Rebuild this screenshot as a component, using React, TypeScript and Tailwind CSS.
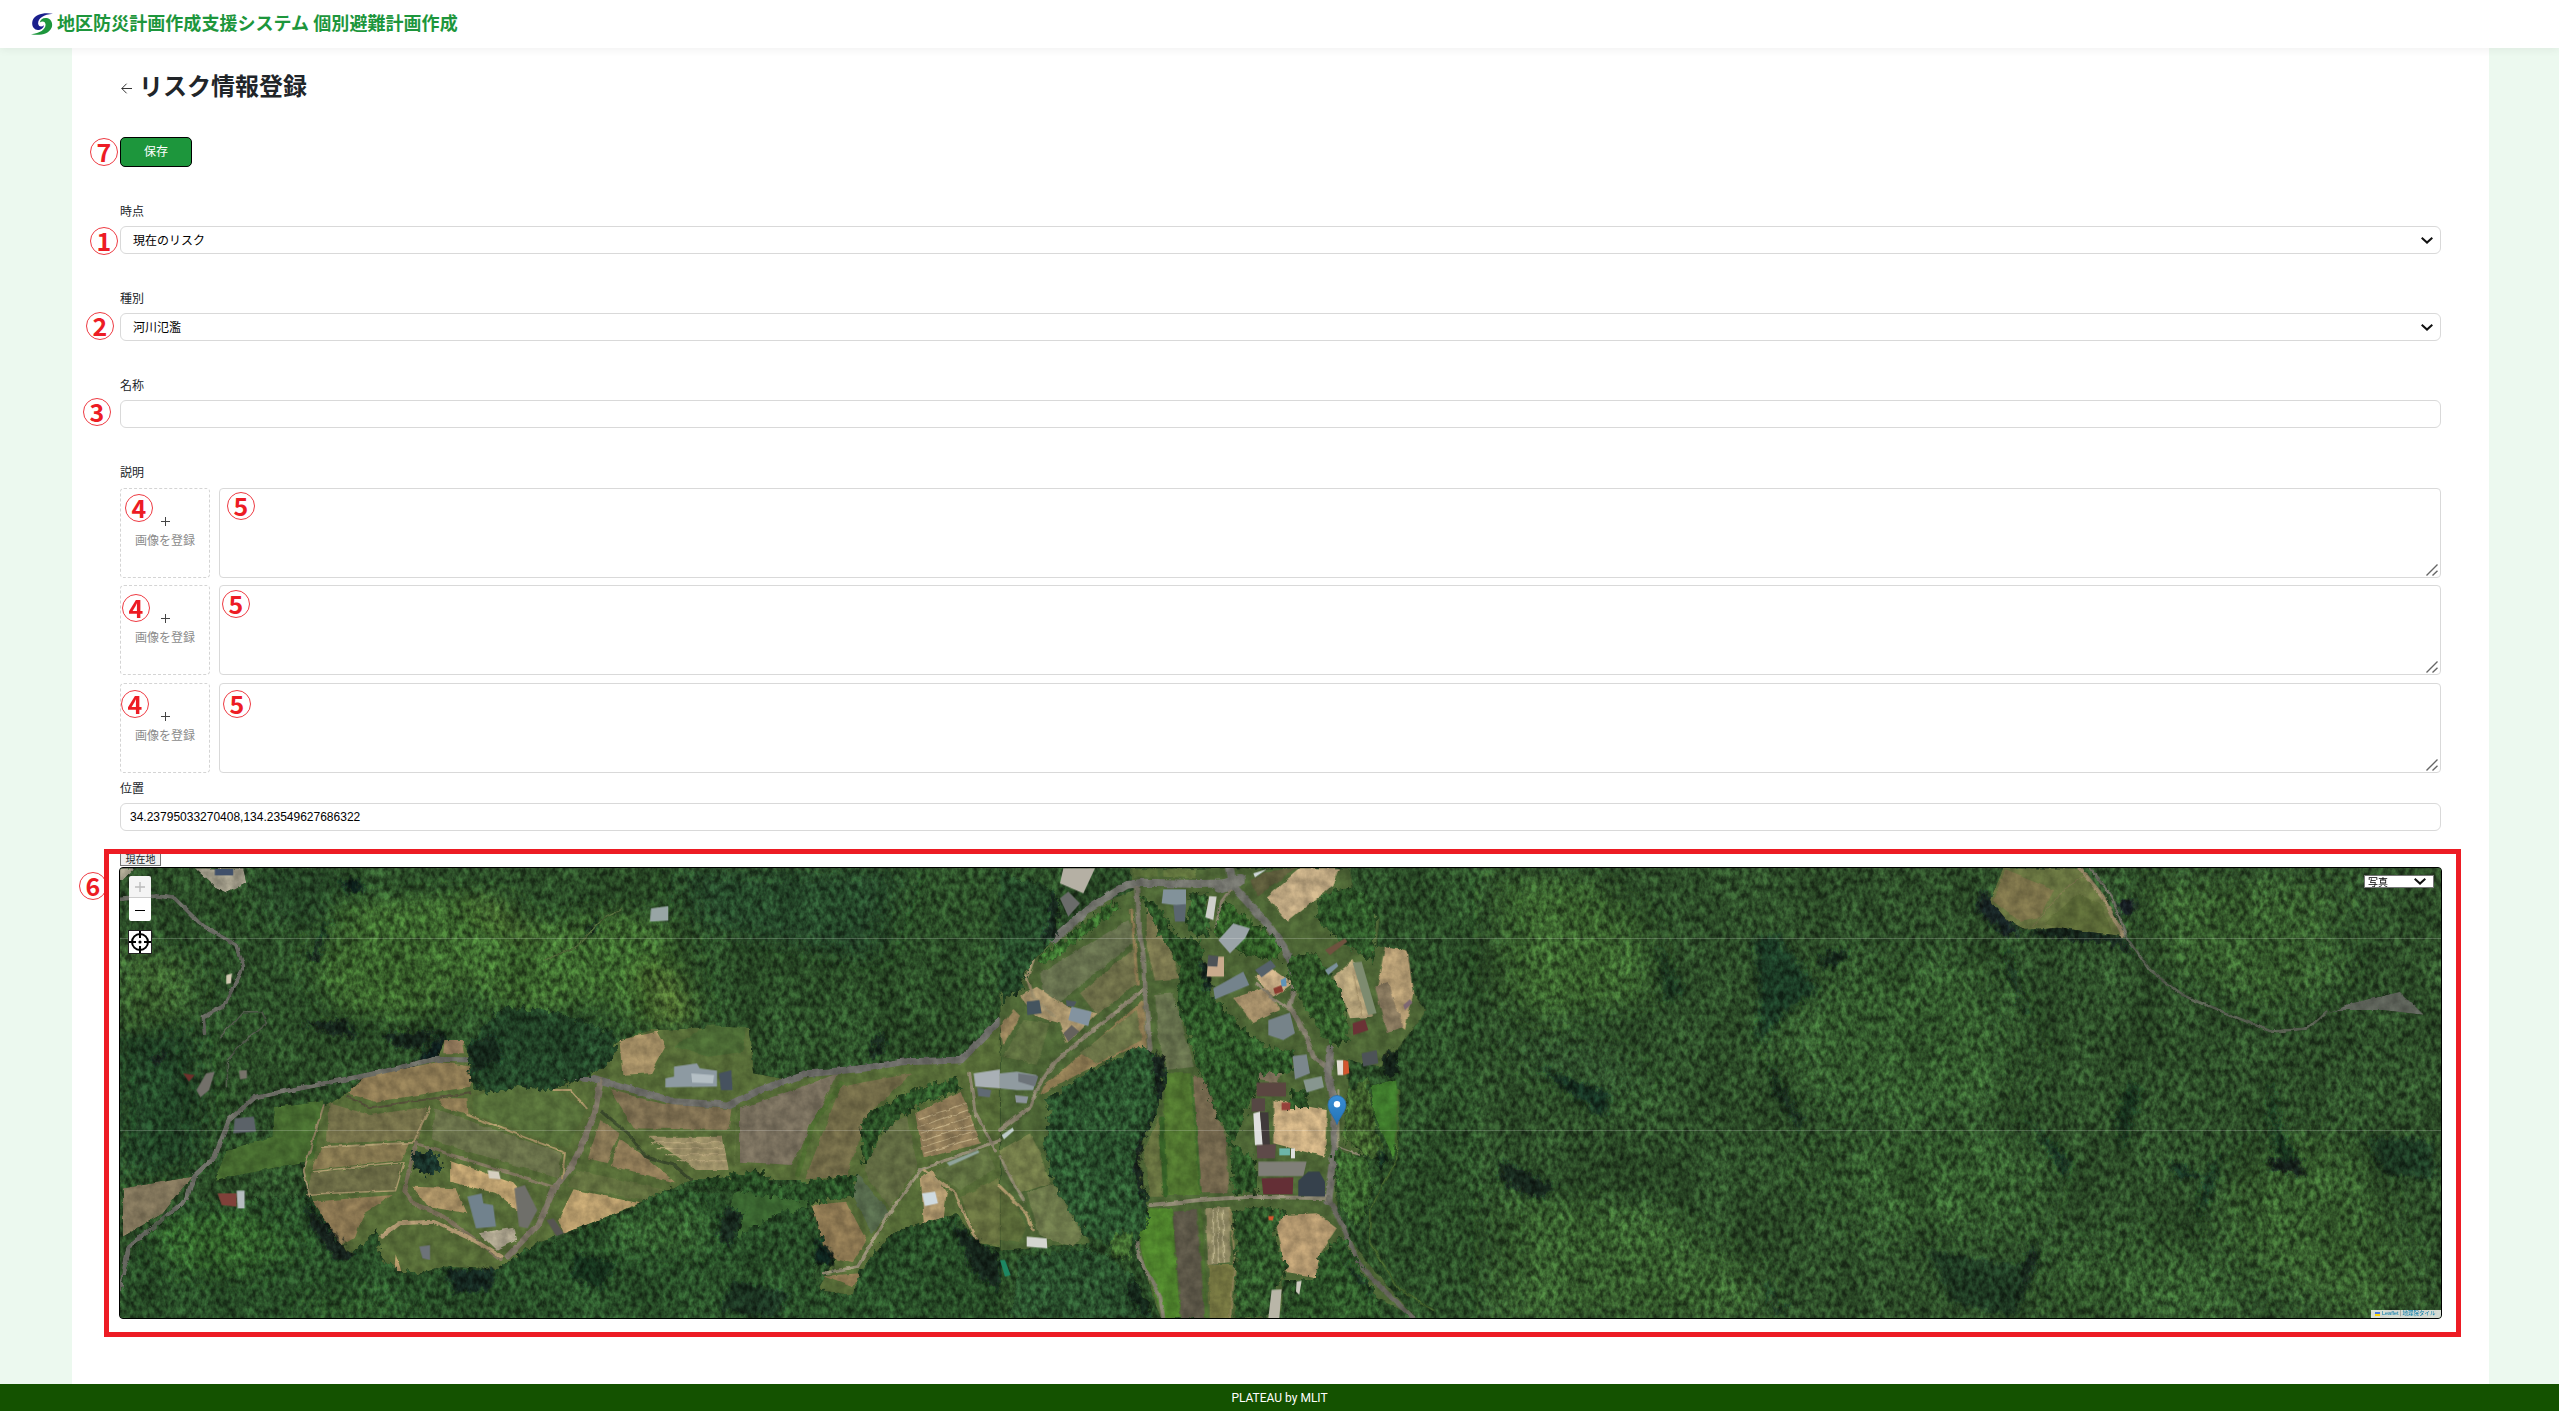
import type { ReactNode } from "react";

type Shape = [points: string, fill: string];

/* ---------- aerial photo: west part ---------- */
const westFarm =
  "370,1020 355,930 390,740 430,700 590,590 600,540 632,540 650,600 650,690 780,680 850,650 905,540 960,510 1130,500 1140,640 1200,660 1320,630 1500,590 1568,480 1568,1160 1530,1150 1490,1060 1380,1120 1330,1230 1310,1305 1250,1290 1280,1200 1240,1040 1220,960 1030,960 930,1040 760,1150 710,1230 600,1220 540,1250 525,1330 510,1290 515,1220 480,1200 430,1180";

const westFields: Shape[] = [
  ["400,730 470,765 570,740 555,840 395,850", "#747049"],
  ["385,865 540,850 525,900 370,930", "#85774f"],
  ["368,938 525,912 515,990 362,1003", "#6b6b45"],
  ["370,1025 510,1005 460,1060 445,1130 420,1155", "#8a7651"],
  ["430,700 460,650 590,605 650,620 645,680 480,725", "#8d7a53"],
  ["600,540 632,540 636,580 598,580", "#8a7356"],
  ["590,715 640,715 642,765 600,745", "#8d7a53"],
  ["583,745 805,880 798,955 578,842", "#687049"],
  ["650,705 730,675 790,690 848,745 815,865 650,762", "#57703a"],
  ["890,690 980,732 1100,748 1095,810 930,805", "#7d6e50"],
  ["1115,745 1200,695 1285,640 1240,800 1205,915 1115,905", "#776e5c"],
  ["1290,680 1415,640 1340,760 1300,950 1228,958", "#716a47"],
  ["955,830 1085,830 1095,930 1040,930", "#9a8e66"],
  ["905,835 950,890 1003,968 890,918", "#8f7b57"],
  ["872,780 905,820 883,910 850,895", "#847452"],
  ["830,930 980,988 950,1022 815,980", "#62703f"],
  ["825,988 940,1030 808,1122 798,1080", "#b59a6a"],
  ["1420,760 1500,695 1535,850 1435,895", "#8f7b57"],
  ["1370,800 1405,768 1425,920 1375,1045 1330,930", "#616b42"],
  ["1320,940 1375,1060 1345,1120 1310,1000", "#566a4c"],
  ["1240,1035 1300,1025 1335,1140 1310,1210 1265,1190", "#8c7751"],
  ["1258,1248 1325,1240 1312,1282", "#8c7751"],
  ["1450,940 1545,865 1560,925 1500,990", "#5f7040"],
  ["1500,1010 1568,955 1568,1155 1530,1150", "#66703f"],
  ["1430,950 1450,930 1475,1000 1470,1070 1435,1090", "#ab946a"],
  ["905,540 970,515 985,560 960,640 910,645", "#a08b62"],
  ["1000,560 1060,495 1125,500 1120,575 1060,590", "#4c6b35"],
  ["1100,1000 1230,965 1235,1050 1150,1110 1100,1150", "#3a6530"],
  ["40,985 160,950 110,1060 40,1130", "#80745a"],
  ["305,740 390,720 372,900 200,960 220,870 300,830", "#466a2f"],
  ["165,25 250,25 255,70 222,98 200,80", "#a09b88"],
  ["35,25 60,25 40,60 35,60", "#a09b88"],
  ["610,900 720,970 760,1050 735,1060 690,1000 610,965", "#bb9f6e"],
  ["545,980 620,985 640,1060 570,1040", "#a58d62"],
  ["660,1120 720,1100 725,1140 690,1170", "#a8a08a"],
  ["515,1180 530,1260 525,1340 510,1300", "#b59a6a"],
];

const westTrees: Shape[] = [
  ["355,1010 400,1120 440,1190 480,1110 490,1200 520,1230 560,1240 600,1225 690,1230 740,1170 830,1120 930,1040 990,985 1070,1000 1120,1060 1110,1130 1180,1060 1230,1045 1260,1140 1240,1250 1260,1300 1310,1310 1330,1220 1380,1120 1480,1070 1568,1200 1568,1380 35,1380 35,1290 60,1160 150,1030", "#2a5029"],
  ["640,560 700,440 780,450 900,520 895,600 850,650 780,690 730,680 680,700 645,660", "#234528"],
  ["1330,770 1400,700 1490,650 1500,690 1420,740 1360,820 1330,920 1325,830", "#2d5428"],
  ["1020,970 1150,930 1180,980 1320,940 1310,1010 1240,1030 1100,990", "#2c5529"],
  ["545,880 580,875 600,920 570,950 550,930", "#1d3a30"],
];

const westShade: Shape[] = [
  ["415,130 395,200 375,310 365,300 385,220", "#0e1f1c"],
  ["560,590 600,510 600,570 575,610 540,640", "#101f1d"],
  ["870,655 905,560 900,620", "#101f1d"],
  ["350,1000 440,1180 410,1190 355,1060", "#12261f"],
  ["845,230 870,160 862,220", "#0e1f1c"],
  ["1350,540 1370,510 1365,580 1340,600", "#12261f"],
  ["90,590 120,570 100,625", "#16211f"],
  ["420,60 450,55 460,100 430,95", "#11231c"],
  ["350,490 430,480 450,540 400,520", "#14281f"],
  ["490,520 590,510 560,570 510,560", "#14281f"],
];

/* shadows and sunlit crowns laid over the southern woods */
const westTreeShade: Shape[] = [
  ["355,1030 400,1110 445,1190 415,1200 370,1110", "#12241f"],
  ["1250,1130 1280,1180 1270,1230 1245,1200", "#0f201c"],
  ["600,1230 690,1225 680,1290 620,1300", "#162b22"],
  ["830,1180 900,1210 870,1290 820,1250", "#17301f"],
  ["1090,1040 1120,1060 1100,1160 1075,1130", "#14281f"],
  ["1480,1080 1568,1190 1568,1300 1520,1230", "#14281f"],
  ["1100,1260 1200,1300 1180,1375 1080,1350", "#1a3424"],
  ["640,560 690,520 700,600 650,640", "#15291f"],
];

const westTreeLight: Shape[] = [
  ["90,1080 260,1050 340,1160 240,1260 120,1220", "#33602c"],
  ["880,1090 1000,1010 1060,1080 1040,1180 920,1170", "#376530"],
  ["380,1290 540,1330 520,1375 360,1375", "#2f592b"],
];

const westBuildings: Shape[] = [
  ["200,28 232,28 232,46 200,46", "#40506a"],
  ["960,145 990,138 990,182 958,185", "#98a5a5"],
  ["1000,620 1040,610 1045,625 1075,632 1075,680 985,682 985,655 1000,650", "#8d9aa2"],
  ["1078,640 1100,630 1102,690 1082,690", "#46525f"],
  ["1030,640 1070,645 1068,670 1032,668", "#b4bfc4"],
  ["1522,640 1568,628 1568,685 1525,680", "#a9b0b5"],
  ["1528,682 1553,690 1550,712 1530,708", "#606a73"],
  ["640,1010 665,1000 668,1030 685,1035 690,1100 655,1105", "#71828d"],
  ["722,985 740,975 762,1050 745,1105 730,1100", "#6f6f6a"],
  ["675,930 695,935 698,958 678,955", "#d6cfc0"],
  ["778,1080 790,1075 808,1120 795,1128", "#575552"],
  ["1432,1000 1455,995 1460,1030 1437,1038", "#cfdadf"],
  ["235,775 268,770 272,815 232,820", "#5b6268"],
  ["205,1000 238,1000 238,1040 212,1035", "#80413a"],
  ["238,992 252,992 252,1045 240,1045", "#b6bdc0"],
  ["185,640 200,635 190,690 175,712 168,690", "#73706a"],
  ["145,640 165,645 155,665", "#6e302c"],
  ["242,632 256,630 256,655 244,658", "#77736a"],
  ["556,1160 575,1155 575,1200 562,1195", "#6d7379"],
  ["1475,908 1530,870 1532,878 1480,918", "#8fa39a"],
  ["220,345 230,340 228,370 220,372", "#d2c9b3"],
];

const westRoads: [string, string, number][] = [
  ["35,1300 50,1160 150,1020 163,950 200,890 225,780 270,712 340,688 480,640 580,598 650,600", "#696a62", 5],
  ["35,118 100,108 130,115 180,200 238,255 250,320 215,440 180,470 182,520", "#64665e", 4],
  ["222,680 222,600 260,530 290,490 280,455 250,455 210,530", "#4f5a49", 2],
  ["860,655 930,690 1000,725 1095,735 1150,690 1230,642 1330,625 1400,605 1500,600 1568,480", "#6b6b66", 7],
  ["872,660 862,760 825,910 790,990 765,1090 710,1190", "#7a7263", 6],
  ["800,650 870,660", "#6b6b66", 4],
  ["550,850 530,990 545,1030 600,1070 700,1200", "#786e58", 4],
  ["550,850 640,900 790,980", "#7d745c", 3],
  ["490,1130 520,1090 580,1085 640,1130 700,1190", "#ad9670", 4],
  ["1568,840 1430,930 1375,1060 1320,1220 1260,1240", "#928b72", 3],
  ["1435,930 1490,1000 1510,1080 1530,1150", "#a9946c", 2.5],
  ["1515,640 1525,760 1560,870", "#8a836c", 3],
  ["390,735 355,930 365,1010", "#8f8160", 2],
  ["385,862 545,848 575,740", "#a39269", 2],
  ["362,1003 515,992 530,905 372,935", "#a39269", 1.5],
  ["430,710 470,742 645,700", "#534f38", 2],
  ["875,755 920,820 950,890 1000,915 1030,960", "#3b4a2c", 3],
  ["640,765 810,878 805,955", "#a39064", 2],
  ["790,690 820,690 848,745", "#a39064", 2],
  ["1110,745 1105,910", "#5c713c", 2],
  ["1290,670 1240,800 1215,945", "#4d6a30", 5],
  ["775,300 830,260 880,170 910,145", "#506838", 2],
];

/* ---------- aerial photo: village ---------- */
const midFarm =
  "0,860 0,400 60,360 100,300 170,230 260,150 400,90 390,25 600,25 690,25 860,25 1050,25 1060,80 960,110 1140,170 1130,260 1220,270 1240,400 1280,450 1200,560 1140,620 1040,600 1050,700 1030,830 1100,880 1010,900 1010,1060 1080,1180 1250,1375 1100,1300 950,1260 850,1260 840,1375 480,1375 400,1130 440,1030 250,1110 270,1150 0,1170";

const midFields: Shape[] = [
  ["120,340 385,180 410,240 180,425 130,410", "#656f4d"],
  ["240,400 400,265 412,370 290,465", "#6f7049"],
  ["440,140 470,160 540,355 465,362 440,260", "#77744c"],
  ["465,405 520,400 545,490 585,620 500,630 475,540", "#65704c"],
  ["130,680 430,420 440,560 380,570 240,640 120,705", "#8d7a52"],
  ["240,580 410,450 425,540 290,610", "#6c7548"],
  ["10,590 70,480 150,490 110,615", "#5f7040"],
  ["0,500 40,450 60,470 10,560", "#948059"],
  ["0,870 90,820 120,880 150,970 60,1000 0,900", "#717a48"],
  ["80,1000 160,970 250,1120 220,1160 120,1130", "#6c784a"],
  ["0,980 50,1040 80,1100 60,1150 0,1140", "#5a6a38"],
  ["495,640 570,640 600,1005 500,1005 490,800", "#50752f"],
  ["578,645 620,660 650,760 680,840 685,1000 605,1000", "#72664c"],
  ["430,870 475,770 490,1010 450,1010", "#66713f"],
  ["410,1110 450,1045 515,1045 540,1375 490,1375 440,1240", "#4f842c"],
  ["518,1055 590,1050 615,1375 545,1375", "#5a5546"],
  ["615,1045 690,1040 690,1210 625,1215", "#8b8560"],
  ["625,1215 700,1215 690,1375 630,1375", "#72733f"],
  ["800,110 900,25 1020,25 1000,75 865,185", "#bda680"],
  ["755,60 790,35 890,25 770,110", "#5b5a3a"],
  ["400,28 470,28 470,50 400,50", "#5b713a"],
  ["490,28 590,28 585,55 490,50", "#62753e"],
  ["700,415 800,380 840,450 760,490", "#a28c67"],
  ["765,350 810,320 880,370 820,410", "#c0a680"],
  ["1000,350 1060,300 1120,470 1050,475", "#b7a47b"],
  ["1155,260 1225,275 1240,400 1215,510 1180,480 1130,390", "#b39b72"],
  ["1125,380 1165,365 1210,500 1160,520", "#85765c"],
  ["820,720 980,750 975,890 820,850", "#c8ac80"],
  ["850,1065 950,1060 1010,1105 960,1180 950,1255 860,1240 830,1100", "#b1966d"],
  ["1110,680 1190,660 1200,760 1180,900 1160,850 1120,760", "#3f7a2c"],
  ["775,660 780,625 840,640 830,670", "#7d705a"],
  ["60,410 110,380 200,440 290,460 200,550 180,490 110,470", "#a8946c"],
];

const midTrees: Shape[] = [
  ["0,30 60,60 150,80 175,130 165,240 90,310 60,390 0,430", "#274b2a"],
  ["380,575 420,560 480,590 500,640 470,760 400,900 440,1010 445,1080 390,1180 250,1120 160,970 130,850 150,760 130,720 190,690 240,650", "#2c552f"],
  ["60,1190 260,1165 340,1200 400,1250 460,1375 30,1375", "#2b522e"],
  ["340,1120 400,1120 390,1200 330,1190", "#40682f"],
  ["420,110 470,130 530,230 600,240 620,380 720,500 800,560 880,570 880,640 790,640 700,850 770,900 770,1000 700,1000 690,850 600,640 530,420 540,330", "#2f5829"],
  ["860,290 950,280 1030,400 1050,540 990,560 930,470 870,370", "#345d2b"],
  ["960,110 1050,80 1130,140 1120,310 1030,250 950,180", "#315b2b"],
  ["700,1050 800,1040 860,1060 820,1110 860,1230 800,1375 700,1375 710,1200", "#31592b"],
  ["870,690 920,690 925,745 870,745", "#2f5829"],
  ["1000,870 1100,890 1120,990 1080,1100 1020,1040 1010,960", "#3a652e"],
  ["960,1180 1030,1130 1120,1290 1150,1375 860,1375 890,1260 950,1250", "#2f582a"],
  ["1040,700 1100,650 1120,760 1160,900 1090,880 1030,840", "#42642e"],
  ["670,120 760,190 830,230 840,300 740,290 640,220", "#336028"],
  ["570,100 620,100 630,230 560,220", "#30592b"],
  ["110,300 330,125 360,145 130,320", "#396a2d"],
];

const midShade: Shape[] = [
  ["455,575 495,590 490,690 440,820 420,900 445,1070 400,930 400,890 470,730", "#12241f"],
  ["150,90 178,130 165,240 120,240 150,180", "#14261f"],
  ["600,290 640,330 635,390 610,390", "#182a22"],
  ["1140,600 1180,560 1200,640 1160,650", "#13251f"],
  ["1130,850 1170,900 1140,930", "#183020"],
  ["1000,1170 1060,1230 1140,1320 1100,1290", "#182b22"],
  ["400,1250 460,1350 440,1375 380,1300", "#16291f"],
];

const midBuildings: Shape[] = [
  ["190,25 285,25 250,100 180,70", "#b5b0a4"],
  ["180,115 205,95 240,130 205,170", "#6a6c6a"],
  ["490,88 558,88 558,140 485,130", "#82929a"],
  ["520,135 558,132 555,185 525,185", "#5a666f"],
  ["628,108 650,110 640,180 616,172", "#cfd0cc"],
  ["655,240 700,190 750,205 735,235 690,280", "#9aa3a8"],
  ["625,290 672,290 672,350 620,350", "#c9ab8d"],
  ["625,285 655,288 652,320 622,318", "#4e5357"],
  ["640,385 730,335 748,375 645,418", "#74838c"],
  ["765,330 812,300 828,320 785,352", "#56626b"],
  ["805,480 870,458 885,520 850,540 805,525", "#768389"],
  ["820,385 845,375 850,395 825,402", "#8b3c30"],
  ["842,360 858,352 860,378 845,380", "#5f94b8"],
  ["1058,308 1085,305 1130,460 1105,465", "#7d8b6f"],
  ["975,270 1035,235 1042,245 990,285", "#6f523f"],
  ["975,330 1010,308 1015,318 985,345", "#7b919b"],
  ["1058,490 1095,478 1105,510 1060,525", "#6b3236"],
  ["1210,435 1230,418 1238,428 1215,450", "#7d6772"],
  ["1010,600 1030,600 1030,645 1013,645", "#e3ddd4"],
  ["1030,600 1045,603 1048,640 1030,645", "#d4562f"],
  ["1085,580 1130,570 1135,610 1090,620", "#4d5357"],
  ["878,588 920,583 930,640 885,658", "#7b878c"],
  ["910,660 965,648 972,682 920,698", "#87968f"],
  ["770,668 858,668 858,710 770,708", "#5b4641"],
  ["755,715 795,715 795,755 755,755", "#564744"],
  ["845,728 872,728 870,750 845,750", "#96403a"],
  ["760,760 780,755 790,855 765,855", "#dfe0de"],
  ["780,757 805,757 810,855 788,855", "#40393a"],
  ["770,855 828,852 825,895 772,895", "#5e4a49"],
  ["838,865 870,865 870,886 838,886", "#6db5a9"],
  ["873,865 885,865 885,895 873,895", "#dfe0de"],
  ["775,905 920,905 910,948 775,948", "#807f78"],
  ["785,955 880,952 878,1003 790,1003", "#642f36"],
  ["895,962 925,935 958,935 975,965 975,1010 895,1008", "#36414c"],
  ["805,1068 822,1068 818,1082 806,1080", "#d4562f"],
  ["815,1290 845,1288 838,1375 805,1375", "#b9b6a8"],
  ["80,425 118,420 125,460 82,465", "#44545f"],
  ["215,440 275,455 265,498 205,480", "#8393a0"],
  ["198,420 230,425 222,440 200,438", "#4e585f"],
  ["190,520 215,495 238,515 205,545", "#65625d"],
  ["0,640 50,635 110,645 100,690 50,690 0,685", "#909ba0"],
  ["55,640 115,648 105,680 55,665", "#6d747a"],
  ["45,705 85,710 80,730 48,728", "#8b939a"],
  ["5,825 38,803 42,812 12,838", "#bccac9"],
  ["80,1130 140,1135 142,1165 80,1160", "#d3d5d0"],
  ["0,1200 15,1200 32,1245 15,1250", "#1d8763"],
  ["760,40 800,28 765,52", "#ced6d8"],
  ["890,1265 905,1262 898,1305 888,1295", "#cdcabf"],
];

const midRoads: [string, string, number][] = [
  ["0,810 90,740 120,670 170,600 280,510 435,385", "#88816c", 4],
  ["160,240 260,150 380,75 430,68 600,72 680,70", "#70716a", 8],
  ["690,25 700,80 800,190 850,260 890,350", "#70716a", 8],
  ["660,80 720,60", "#70716a", 12],
  ["410,85 415,200 430,290 435,390 450,570", "#7d7a6a", 5],
  ["890,350 870,440 910,510 940,590 990,630", "#7f7a6a", 5],
  ["770,370 810,410 870,450", "#867e6b", 3],
  ["990,570 985,650 1000,720 1005,850 985,1020", "#73716a", 8],
  ["650,200 660,130 690,90", "#867e6b", 3],
  ["450,1035 600,1020 750,1010 985,1015", "#8a856f", 4],
  ["985,1015 1030,1100 1070,1200 1120,1260 1240,1375", "#66655c", 5],
  ["405,1130 420,1200 480,1310 490,1375", "#807d6b", 4],
  ["100,300 80,350 100,410 160,470", "#9d8f6c", 3],
  ["0,890 40,970 70,1020", "#918b72", 3],
  ["0,980 80,1060 100,1110", "#a99569", 3],
  ["485,780 497,1005", "#355f26", 5],
  ["575,650 602,1000", "#3f6b2b", 2],
  ["600,1050 620,1375", "#496a2f", 3],
  ["690,1050 705,1200 690,1375", "#8a7f55", 2],
  ["1015,690 1015,860 1090,890", "#8f8a72", 2],
  ["1195,690 1190,900 1110,1050 1110,1150 1200,1290 1300,1350", "#48682f", 2.5],
  ["395,150 412,370", "#8d7a52", 3],
  ["640,1050 640,1210", "#bdb490", 1],
  ["655,1050 655,1210", "#bdb490", 1],
  ["670,1050 670,1210", "#bdb490", 1],
  ["1060,340 1085,465", "#9b8963", 1],
];

/* ---------- aerial photo: eastern hills ---------- */
const eastFields: Shape[] = [
  ["822,25 945,25 985,110 1015,228 960,215 910,200 860,210 825,175 800,120", "#66723f"],
  ["825,30 905,90 880,175 850,185 805,120", "#7b7249"],
  ["945,100 985,140 1000,220 940,210 890,190", "#5a6836"],
  ["1340,470 1390,430 1470,395 1510,465 1440,450 1370,450", "#5c6158"],
];

const eastShade: Shape[] = [
  ["785,90 830,150 850,230 820,220 780,150", "#122420"],
  ["860,215 920,195 1020,230 1035,290 1000,250 900,235", "#13261e"],
  ["1010,130 1035,115 1040,150 1015,170", "#141f22"],
  ["825,240 865,480 850,430 830,330", "#152a1e"],
  ["415,240 450,220 520,390 470,450 420,560 425,400", "#1f3d25"],
  ["260,250 300,400 270,430", "#1d3a24"],
  ["430,1230 455,1350 480,1320 450,1370", "#13261e"],
  ["870,1140 880,1190 840,1370 850,1250", "#13261e"],
  ["700,1170 850,1220 840,1370 740,1330", "#213f27"],
  ["1260,650 1270,780 1315,950 1270,900 1255,760", "#17301f"],
  ["1030,650 1045,700 1015,880 1010,760", "#17301f"],
  ["1420,830 1520,840 1530,960 1440,940", "#1d3824"],
  ["1250,900 1310,900 1315,950 1260,930", "#12221f"],
  ["0,900 90,980 60,1020 0,960", "#14281f"],
  ["60,620 180,700 170,780 130,720", "#193222"],
  ["435,600 495,780 490,820 450,700", "#152a1e"],
  ["850,760 930,900 925,960 890,850", "#193222"],
  ["1180,870 1160,1000 1140,1090 1150,960", "#193222"],
  ["1090,900 1150,950 1110,960", "#193222"],
  ["570,260 560,300 530,330 520,290", "#15291e"],
];

const eastLight: Shape[] = [
  ["0,60 150,60 240,200 240,420 60,470 0,380", "#3b642f"],
  ["560,290 800,300 860,560 830,740 620,780 480,650 450,500", "#365c2e"],
  ["560,830 780,780 900,900 870,1100 620,1130 500,950", "#355b2e"],
  ["1300,800 1400,850 1450,1100 1500,1300 1400,1380 1200,1200 1180,980", "#375e2f"],
  ["1050,70 1350,60 1370,350 1250,450 1080,300", "#375f2f"],
  ["0,1000 260,1050 420,1250 420,1375 0,1375", "#375e2f"],
  ["850,1250 1050,1100 1250,1250 1200,1375 870,1375", "#355c2d"],
  ["20,540 180,560 230,680 150,690 50,620", "#33552f"],
];

const eastRoads: [string, string, number][] = [
  ["948,25 985,110 1018,228", "#968766", 4],
  ["965,25 1000,110 1022,225", "#717265", 3],
  ["1022,228 1060,330 1120,410 1200,470 1260,515 1320,505 1350,455", "#596152", 3],
  ["870,200 920,90 960,40", "#7d764f", 1],
];

function Polys({ items }: { items: Shape[] }) {
  return (
    <>
      {items.map(([points, fill], i) => (
        <polygon key={i} points={points} fill={fill} />
      ))}
    </>
  );
}

function Roads({ items }: { items: [string, string, number][] }) {
  return (
    <>
      {items.map(([points, stroke, width], i) => (
        <polyline
          key={i}
          points={points}
          fill="none"
          stroke={stroke}
          strokeWidth={width}
          strokeLinejoin="round"
          strokeLinecap="round"
          vectorEffect="non-scaling-stroke"
        />
      ))}
    </>
  );
}

const WEST = "translate(100 860) scale(.574 .3333)";
const MID = "translate(1000 860) scale(.3333)";
const EAST = "translate(1500 860) scale(.6122 .3333)";

function AerialPhoto() {
  return (
    <svg className="block h-full w-full" viewBox="120 868 2321 450" preserveAspectRatio="none">
      <defs>
        <filter id="canopy" filterUnits="userSpaceOnUse" x="110" y="858" width="2341" height="470" colorInterpolationFilters="sRGB">
          <feTurbulence type="fractalNoise" baseFrequency="0.19 0.13" numOctaves={3} seed={7} result="n" />
          <feTurbulence type="fractalNoise" baseFrequency="0.03 0.015" numOctaves={4} seed={11} result="m" />
          <feColorMatrix in="n" type="matrix" values="1.9 0 0 0 -0.45  1.9 0 0 0 -0.45  1.9 0 0 0 -0.45  0 0 0 0 1" result="g" />
          <feColorMatrix in="m" type="matrix" values="1.6 0 0 0 -0.3  1.6 0 0 0 -0.3  1.6 0 0 0 -0.3  0 0 0 0 1" result="p" />
          <feDisplacementMap in="SourceGraphic" in2="n" scale="13" xChannelSelector="G" yChannelSelector="B" result="d" />
          <feComposite in="d" in2="g" operator="arithmetic" k1="0.85" k2="0.54" result="t" />
          <feComposite in="t" in2="p" operator="arithmetic" k1="0.3" k2="0.83" result="u" />
          <feComposite in="u" in2="d" operator="in" />
        </filter>
        <filter id="ground" filterUnits="userSpaceOnUse" x="110" y="858" width="2341" height="470" colorInterpolationFilters="sRGB">
          <feTurbulence type="fractalNoise" baseFrequency="0.09" numOctaves={4} seed={3} result="n" />
          <feColorMatrix in="n" type="matrix" values="1.6 0 0 0 -0.3  1.6 0 0 0 -0.3  1.6 0 0 0 -0.3  0 0 0 0 1" result="g" />
          <feDisplacementMap in="SourceGraphic" in2="n" scale="4" xChannelSelector="G" yChannelSelector="B" result="d" />
          <feComposite in="d" in2="g" operator="arithmetic" k1="0.3" k2="0.85" result="t" />
          <feComposite in="t" in2="d" operator="in" />
        </filter>
        <filter id="soft" x="-20%" y="-20%" width="140%" height="140%">
          <feGaussianBlur stdDeviation="24" />
        </filter>
        <filter id="edge" x="-20%" y="-20%" width="140%" height="140%">
          <feGaussianBlur stdDeviation="5" />
        </filter>
        <linearGradient id="pin" x1="0" y1="0" x2="0" y2="1">
          <stop offset="0" stopColor="#3a8fd6" />
          <stop offset="1" stopColor="#2272b5" />
        </linearGradient>
      </defs>

      <g filter="url(#canopy)">
        <rect x="100" y="850" width="2361" height="490" fill="#2d5029" />
        <rect x="1480" y="850" width="981" height="490" fill="#2f502a" />
        <g transform={WEST}>
          <g filter="url(#soft)">
            <polygon points="420,130 640,100 760,200 900,150 1000,200 1040,480 960,500 860,420 740,480 640,380 560,480 420,460 370,330" fill="#3c682f" />
            <polygon points="640,100 700,120 770,240 720,240 660,170" fill="#4a6e32" />
            <polygon points="950,300 1000,350 1030,480 970,500" fill="#536f33" />
            <polygon points="1000,30 1400,30 1350,300 1050,200" fill="#274929" />
            <polygon points="35,250 160,300 150,460 35,520" fill="#3b602d" />
            <polygon points="35,520 160,500 180,900 35,960" fill="#234427" />
            <polygon points="260,20 420,20 400,200 280,180" fill="#254628" />
          </g>
          <g filter="url(#edge)"><Polys items={westShade} /></g>
        </g>
        <g transform={EAST}>
          <g filter="url(#soft)"><Polys items={eastLight} /></g>
          <g filter="url(#edge)"><Polys items={eastShade} /></g>
        </g>
      </g>

      <g filter="url(#ground)">
        <g transform={WEST}>
          <polygon points={westFarm} fill="#566b37" />
          <Polys items={westFields} />
          <Roads items={westRoads} />
        </g>
        <g transform={MID}>
          <polygon points={midFarm} fill="#4d6535" />
          <Polys items={midFields} />
          <Roads items={midRoads} />
        </g>
        <g transform={EAST}>
          <Polys items={eastFields} />
          <Roads items={eastRoads} />
        </g>
        <g transform={WEST} stroke="#b3a17a" strokeWidth="3">
          <path d="M960 848H1085M970 866H1088M985 884H1090M1005 902H1092M1425 780L1508 730M1428 800L1512 750M1430 820L1518 770M1432 840L1522 792M1434 860L1526 812M1436 880L1530 832" />
        </g>
      </g>

      <g filter="url(#canopy)">
        <g transform={WEST}>
          <Polys items={westTrees} />
          <g filter="url(#soft)"><Polys items={westTreeLight} /></g>
          <g filter="url(#edge)"><Polys items={westTreeShade} /></g>
        </g>
        <g transform={MID}>
          <Polys items={midTrees} />
          <g filter="url(#edge)"><Polys items={midShade} /></g>
        </g>
      </g>

      <g transform={WEST}><Polys items={westBuildings} /></g>
      <g transform={MID}><Polys items={midBuildings} /></g>

      <path d="M120 938.5H2441M120 1130.5H2441" stroke="#fff" strokeOpacity=".2" />

      <path
        d="M1337 1124.5C1334.500 1117 1328 1111.500 1328 1104.500A9 9 0 0 1 1346 1104.500C1346 1111.500 1339.500 1117 1337 1124.500Z"
        fill="url(#pin)"
        stroke="#2a6ea8"
        strokeWidth=".8"
      />
      <circle cx="1337" cy="1104.300" r="3.200" fill="#fff" />
    </svg>
  );
}

function Mark({ n, className }: { n: number; className: string }) {
  return (
    <span
      className={`pointer-events-none absolute z-10 flex h-7 w-7 items-center justify-center rounded-full border border-[#ee3a42] pb-[3px] text-[25px] leading-[26px] font-bold text-[#ed1c24] ${className}`}
    >
      {n}
    </span>
  );
}

function Chevron({ className }: { className: string }) {
  return (
    <svg className={className} viewBox="0 0 12 7" fill="none" stroke="#111" strokeWidth="2">
      <path d="M.7.8 6 5.600 11.300.8" />
    </svg>
  );
}

function Field({ label, className, children }: { label: string; className: string; children: ReactNode }) {
  return (
    <div className={className}>
      <div className="h-[18px] text-xs leading-[18px] text-[#212529]">{label}</div>
      <div className="relative mt-1.5 flex h-7 items-center justify-between rounded-md border border-[#d9d9d9] bg-white text-xs text-black">
        {children}
      </div>
    </div>
  );
}

function NoteRow({ className, four, five }: { className: string; four: string; five: string }) {
  return (
    <div className={`relative flex h-[90px] gap-[9px] ${className}`}>
      <div className="flex w-[90px] flex-col items-center rounded border border-dashed border-[#d4d4d4] pt-[28px] text-xs text-[#8c8c8c]">
        <svg className="h-[9px] w-[9px]" viewBox="0 0 9 9" stroke="#444">
          <path d="M4.500 0V9M0 4.500H9" />
        </svg>
        <span className="mt-[5px] leading-[18px]">画像を登録</span>
      </div>
      <div className="relative flex-1 rounded border border-[#d9d9d9] bg-white">
        <svg className="absolute right-[2px] bottom-[1px] h-3 w-3" viewBox="0 0 12 12" stroke="#666" strokeWidth="1.400">
          <path d="M.5 11.500 11.500.5M6.500 11.500 11.500 6.800" />
        </svg>
      </div>
      <Mark n={4} className={four} />
      <Mark n={5} className={five} />
    </div>
  );
}

export default function App() {
  return (
    <div className='flex h-[1411px] w-[2559px] flex-col overflow-hidden bg-[#ecf9ef] font-["Noto_Sans_CJK_JP",sans-serif]'>
      <header className="relative z-20 flex h-12 shrink-0 items-center bg-white pl-[31px] shadow-[0_2px_8px_rgba(0,0,0,0.06)]">
        <svg className="h-[22px] w-[22px]" viewBox="0 0 22 22">
          <path d="M22 .8C14-.8 4 .5 1.600 7.500.5 11.500 1.500 14.500 4.500 16.500 8 17.800 12.500 16 13 12.200 11 14.200 7.800 14 7.200 11 6.500 6 12 1.500 22 .8Z" fill="#1a1f8c" />
          <path d="M0 21.200C8 22.800 18 21.500 20.700 14.500 22 10.500 20.500 7 17.500 5.500 13 4 9.300 6 8.800 9.500 11 7.800 14 8 14.500 11 15.200 16 9.500 20.500 0 21.200Z" fill="#1d963c" />
        </svg>
        <span className="ml-1 pb-[5px] text-[18px] leading-6 font-bold tracking-[0.05px] whitespace-pre text-[#1d963c]">地区防災計画作成支援システム 個別避難計画作成</span>
      </header>

      <main className="mx-[72px] w-[2417px] flex-1 bg-white px-12 pt-5">
        <div className="flex h-9 items-center">
          <svg className="mt-[5px] ml-px h-[11px] w-[11px]" viewBox="0 0 11 11" fill="none" stroke="#333">
            <path d="M11 5.500H.8M5.600.7.8 5.500 5.600 10.300" />
          </svg>
          <h1 className="ml-[7px] pb-[3px] text-2xl leading-9 font-bold text-[#212529]">リスク情報登録</h1>
        </div>

        <div className="relative mt-[33px] h-[30px]">
          <button className="block h-[30px] w-[72px] rounded-[5px] border border-black bg-[#1d963c] pb-[3px] text-xs leading-none text-white">保存</button>
          <Mark n={7} className="top-[1px] left-[-30px]" />
        </div>

        <Field label="時点" className="mt-[35px]">
          <span className="pl-3">現在のリスク</span>
          <Chevron className="mr-[7px] h-[7px] w-3" />
          <Mark n={1} className="top-[0px] left-[-31px]" />
        </Field>
        <Field label="種別" className="mt-[35px]">
          <span className="pl-3">河川氾濫</span>
          <Chevron className="mr-[7px] h-[7px] w-3" />
          <Mark n={2} className="top-[-2px] left-[-35px]" />
        </Field>
        <Field label="名称" className="mt-[35px]">
          <Mark n={3} className="top-[-3px] left-[-38px]" />
        </Field>

        <div className="mt-[35px] h-[18px] text-xs leading-[18px] text-[#212529]">説明</div>
        <NoteRow className="mt-[7px]" four="top-[6px] left-[5px]" five="top-[4px] left-[107px]" />
        <NoteRow className="mt-[7px]" four="top-[9px] left-[2px]" five="top-[5px] left-[102px]" />
        <NoteRow className="mt-[8px]" four="top-[7px] left-[1px]" five="top-[7px] left-[103px]" />

        <Field label="位置" className="mt-[6px]">
          <span className='pl-[9px] font-["Liberation_Sans",sans-serif]'>34.23795033270408,134.23549627686322</span>
        </Field>

        <section className="relative mt-[18px]">
          <button className="flex h-[17px] w-[41px] items-center justify-center border border-[#767676] bg-[#efefef] pt-[3px] text-[10px] leading-none text-[#212529]">現在地</button>
          <div className="relative -mx-px mt-px h-[452px] overflow-hidden rounded-[4px] border border-black bg-[#2d5529]">
            <AerialPhoto />
            <div className="absolute top-2 left-[9px] flex w-[22px] flex-col overflow-hidden rounded-[2px]">
              <div className="flex h-[22px] items-center justify-center border-b border-[#ccc] bg-[#f4f4f4]">
                <svg className="h-[10px] w-[10px]" viewBox="0 0 10 10" stroke="#bbb" strokeWidth="1.400"><path d="M5 0V10M0 5H10" /></svg>
              </div>
              <div className="flex h-[23px] items-center justify-center bg-white">
                <svg className="h-[10px] w-[10px]" viewBox="0 0 10 10" stroke="#000" strokeWidth="1.200"><path d="M0 5.500H10" /></svg>
              </div>
            </div>
            <div className="absolute top-[62px] left-2 h-6 w-6 border border-[#222] bg-white">
              <svg className="h-full w-full" viewBox="0 0 22 22" fill="none" stroke="#000" strokeWidth="2">
                <circle cx="11" cy="11" r="8" />
                <path d="M11 0V7M11 15V22M0 11H7M15 11H22" />
                <circle cx="11" cy="11" r="1.600" fill="#000" stroke="none" />
              </svg>
            </div>
            <div className="absolute top-[7px] right-[7px] flex h-[13px] w-[70px] items-center justify-between border border-[#767676] bg-white pl-[3px] text-[10px] leading-none text-black">
              <span>写真</span>
              <Chevron className="mr-[7px] h-[7px] w-3" />
            </div>
            <div className="absolute right-0 bottom-0 flex h-2 w-[70px] items-center bg-white/80 pl-1 text-[5.500px] leading-none whitespace-pre text-[#0078a8]">
              <span className="mr-0.5 flex h-1 w-[5px] flex-col">
                <span className="h-0.5 bg-[#4c7be1]" />
                <span className="h-0.5 bg-[#ffd500]" />
              </span>
              <span className='font-["Liberation_Sans",sans-serif]'>Leaflet</span>
              <span className="text-[#555]"> | </span>
              <span>地理院タイル</span>
            </div>
          </div>
          <Mark n={6} className="top-[23px] left-[-41px]" />
          <div className="pointer-events-none absolute top-0 left-[-16px] z-10 h-[488px] w-[2357px] border-[5px] border-[#ed1c24]" />
        </section>
      </main>

      <footer className="flex h-[27px] shrink-0 items-center justify-center bg-[#145200] font-[Roboto,sans-serif] text-xs text-white">
        PLATEAU by MLIT
      </footer>
    </div>
  );
}
